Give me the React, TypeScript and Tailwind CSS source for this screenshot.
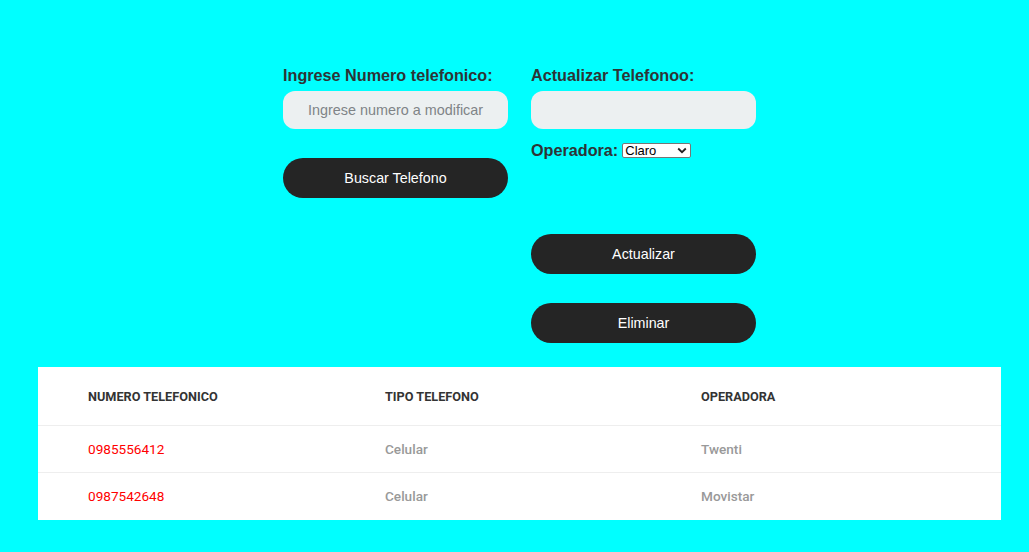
import React from "react";

export default function App() {
  const rows = [
    { num: "0985556412", tipo: "Celular", op: "Twenti" },
    { num: "0987542648", tipo: "Celular", op: "Movistar" },
  ];
  return (
    <div className="min-h-[552px] w-full bg-[#00ffff] overflow-hidden" style={{ fontFamily: "Arial, 'Liberation Sans', sans-serif" }}>
      <div className="flex justify-center gap-[23px] pl-[10px] pt-[66px]">
        <div className="flex w-[225px] flex-col">
          <label className="text-[16.2px] font-bold leading-[18px] text-[#2d3436]">Ingrese Numero telefonico:</label>
          <input
            className="mt-[7px] h-[38px] w-full rounded-[12px] bg-[#ecf0f1] text-center text-[14.4px] text-[#2d3436] outline-none placeholder:text-[#7f8487]"
            placeholder="Ingrese numero a modificar"
          />
          <button className="mt-[29px] h-[40px] w-full rounded-full bg-[#252525] pt-[1px] text-[14.3px] text-white">Buscar Telefono</button>
        </div>
        <div className="flex w-[225px] flex-col">
          <label className="text-[16.2px] font-bold leading-[18px] text-[#2d3436]">Actualizar Telefonoo:</label>
          <input className="mt-[7px] h-[38px] w-full rounded-[12px] bg-[#ecf0f1] text-center text-[14.4px] outline-none" />
          <div className="mt-[11px] flex h-[19px] items-center gap-[4px]">
            <span className="text-[16.2px] font-bold leading-[18px] text-[#2d3436]">Operadora:</span>
            <div
              role="combobox"
              className="mt-[2px] flex h-[15px] w-[69px] items-center justify-between rounded-[2px] border border-[#767676] bg-white pl-[2px] pr-[3px] text-[13px] leading-[13px] text-black"
            >
              <span>Claro</span>
              <svg width="10" height="7" viewBox="0 0 10 7" fill="none">
                <path d="M1.2 1.5 L5 5.2 L8.8 1.5" stroke="#222" strokeWidth="1.8" />
              </svg>
            </div>
          </div>
          <button className="mt-[75px] h-[40px] w-full rounded-full bg-[#252525] pt-[1px] text-[14.3px] text-white">Actualizar</button>
          <button className="mt-[29px] h-[40px] w-full rounded-full bg-[#252525] pt-[1px] text-[14.3px] text-white">Eliminar</button>
        </div>
      </div>
      <div className="ml-[38px] mt-[24px] w-[963px] bg-white" style={{ fontFamily: "Roboto, sans-serif" }}>
        <div className="grid h-[59px] grid-cols-[297px_316px_300px] items-center border-b border-[#eeeeee] pl-[50px] pt-[2px] text-[12.7px] font-bold text-[#333333]">
          <div>NUMERO TELEFONICO</div>
          <div>TIPO TELEFONO</div>
          <div>OPERADORA</div>
        </div>
        {rows.map((r, i) => (
          <div
            key={r.num}
            className={`grid h-[47px] grid-cols-[297px_316px_300px] items-center pl-[50px] text-[13.6px] ${i === 0 ? "border-b border-[#eeeeee]" : ""}`}
          >
            <div className="text-[#ff0000]">{r.num}</div>
            <div className="font-medium text-[#999999]">{r.tipo}</div>
            <div className="font-medium text-[#999999]">{r.op}</div>
          </div>
        ))}
      </div>
    </div>
  );
}
